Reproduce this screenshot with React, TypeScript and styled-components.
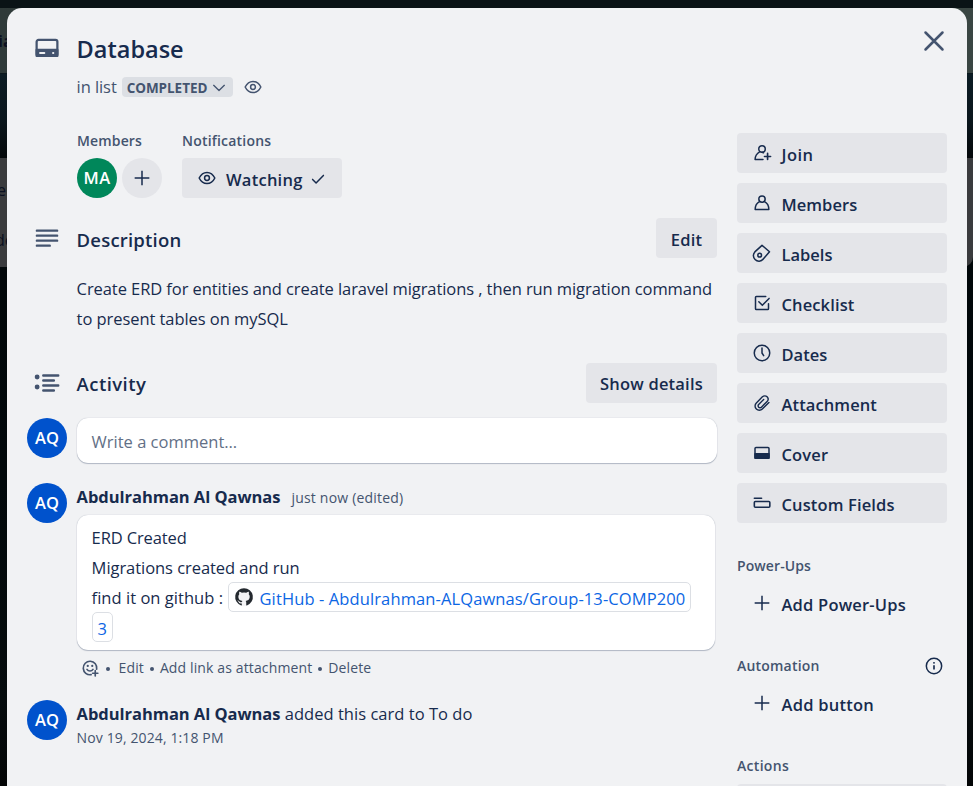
import React, { ReactNode } from "react";
import styled, { createGlobalStyle, css } from "styled-components";

const ink = "#172b4d";
const subtle = "#44546f";

const GlobalStyle = createGlobalStyle`
  * { box-sizing: border-box; }
  html, body { margin: 0; height: 100%; overflow: hidden; }
  body { font-family: "Open Sans", "Noto Sans", sans-serif; font-size: 16.5px; color: ${ink}; background: #02080a; }
  p, h1, h2, h3 { margin: 0; }
  button { font: inherit; color: inherit; border: 0; padding: 0; background: none; text-align: left; }
  svg { display: block; flex: none; }
`;

const Page = styled.div`
  position: relative;
  width: 973px;
  height: 786px;
  overflow: hidden;
  background: linear-gradient(#0a1316 8px, #0a1316 73px, #0c1c24 74px, #0a161c 120px, #05090b 157px, #010709 270px, #01080a 480px, #060c0d 700px, #030506 786px);
`;

const Strip = styled.div<{ $top: number; $height: number; $color: string; $radius?: number }>`
  position: absolute;
  left: 0;
  right: 0;
  top: ${(p) => p.$top}px;
  height: ${(p) => p.$height}px;
  border-radius: 0 0 ${(p) => p.$radius ?? 0}px 0;
  background: ${(p) => p.$color};
`;

const BoardText = styled.span<{ $top: number; $left: number; $bold?: boolean }>`
  position: absolute;
  left: ${(p) => p.$left}px;
  top: ${(p) => p.$top}px;
  font-size: 16px;
  line-height: 24px;
  font-weight: ${(p) => (p.$bold ? 700 : 400)};
  white-space: nowrap;
  color: #0a1020;
`;

const Modal = styled.div`
  position: absolute;
  left: 7px;
  top: 8px;
  width: 960px;
  height: 800px;
  padding: 0 20px;
  border-radius: 15px;
  background: #f1f2f4;
`;

const T = styled.span<{ $ls?: number }>`
  letter-spacing: ${(p) => p.$ls ?? 0}px;
  white-space: pre;
`;

const Row = styled.div<{ $mt?: number }>`
  display: grid;
  grid-template-columns: 40px minmax(0, 1fr);
  column-gap: 9.600px;
  margin-top: ${(p) => p.$mt ?? 0}px;
`;

const IconCell = styled.div<{ $pt?: number }>`
  display: flex;
  justify-content: center;
  align-items: flex-start;
  padding-top: ${(p) => p.$pt ?? 0}px;
  color: ${subtle};
`;

const Header = styled.header`
  display: flex;
  justify-content: space-between;
  height: 125px;
  padding-top: 25px;
`;

const Title = styled.h1`
  font-size: 23.5px;
  line-height: 33px;
  height: 32px;
  font-weight: 550;
`;

const InList = styled.div`
  display: flex;
  align-items: center;
  margin-top: 12px;
  height: 20px;
  line-height: 20px;
  color: ${subtle};
`;

const ListBadge = styled.button`
  display: flex;
  align-items: center;
  justify-content: space-between;
  height: 20px;
  width: 111px;
  margin: 0 10px 0 5px;
  padding: 0 6px 0 5px;
  border-radius: 4px;
  background: #dcdfe4;
  font-size: 13.5px;
  line-height: 20px;
  padding-top: 1px;
  font-weight: 700;
`;

const CloseButton = styled.button`
  width: 30px;
  height: 30px;
  margin: -7px -2px 0 0;
  color: ${subtle};
`;

const Body = styled.div`
  display: grid;
  grid-template-columns: 690px 210px;
  column-gap: 20px;
`;

const Groups = styled.div`
  display: flex;
  gap: 20px;
  padding-left: 50px;
  margin-top: -2px;
`;

const Label = styled.h3`
  font-size: 14px;
  line-height: 20px;
  font-weight: 550;
  color: ${subtle};
`;

const Inline = styled.div`
  display: flex;
  gap: 5px;
  margin-top: 7px;
`;

const Circle = styled.div<{ $bg: string; $fg?: string }>`
  display: flex;
  align-items: center;
  justify-content: center;
  width: 40px;
  height: 40px;
  border-radius: 50%;
  background: ${(p) => p.$bg};
  color: ${(p) => p.$fg ?? "#fff"};
  font-size: 16.5px;
  line-height: 20px;
  font-weight: 600;
  span { margin-top: -1px; }
`;

const buttonBase = css`
  display: flex;
  align-items: center;
  height: 40px;
  border-radius: 4px;
  background: #e4e5e9;
  font-size: 16.5px;
  line-height: 20px;
  padding-top: 3px;
  font-weight: 550;
`;

const WatchButton = styled.button`
  ${buttonBase}
  width: 160px;
  padding-left: 15px;
  svg { margin-top: -4px; }
  svg + span { margin-left: 9px; }
  span + svg { margin-left: 5px; margin-top: -2px; }
`;

const ActionButton = styled.button<{ $w: number; $pt?: number }>`
  ${buttonBase}
  width: ${(p) => p.$w}px;
  padding-top: ${(p) => p.$pt ?? 3}px;
  justify-content: center;
`;

const SideButton = styled.button<{ $ghost?: boolean }>`
  ${buttonBase}
  width: 210px;
  padding-left: 15px;
  gap: 9.500px;
  ${(p) => p.$ghost && "background: transparent; padding-top: 2px;"}
  svg { margin-top: -4px; }
`;

const SectionHead = styled.div`
  display: flex;
  justify-content: space-between;
  height: 40px;
`;

const SectionTitle = styled.h2<{ $lh?: number }>`
  font-size: 18.5px;
  line-height: ${(p) => p.$lh ?? 43}px;
  font-weight: 550;
`;

const Paragraph = styled.p<{ $mt?: number }>`
  margin-top: ${(p) => p.$mt ?? 0}px;
  line-height: 30px;
  white-space: nowrap;
`;

const card = css`
  background: #fff;
  border-radius: 11px;
  box-shadow: 0 1px 1px #091e4240, 0 0 1px #091e424f;
`;

const CommentInput = styled.div`
  ${card}
  height: 45px;
  padding: 0 15px;
  line-height: 47px;
  color: #626f86;
`;

const CommentCard = styled.div`
  ${card}
  width: 638px;
  height: 135px;
  margin-top: 3px;
  padding: 8px 15px 0;
`;

const Meta = styled.div`
  display: flex;
  align-items: baseline;
  height: 29px;
  line-height: 27px;
`;

const Strong = styled.strong`
  font-weight: 700;
`;

const Small = styled.div<{ $ml?: number; $mt?: number }>`
  margin-left: ${(p) => p.$ml ?? 0}px;
  margin-top: ${(p) => p.$mt ?? 0}px;
  font-size: 14px;
  line-height: 20px;
  color: ${subtle};
`;

const SmartLink = styled.a<{ $ml?: number }>`
  display: inline-flex;
  align-items: center;
  gap: 5.500px;
  height: 30px;
  margin-left: ${(p) => p.$ml ?? 0}px;
  margin-top: -1px;
  margin-bottom: 1px;
  padding: 0 5px;
  border: 1px solid #dcdfe4;
  border-radius: 5px;
  color: #0c66e4;
  vertical-align: top;
  span { padding-top: 3px; }
`;

const Actions = styled.div`
  display: flex;
  align-items: center;
  height: 20px;
  margin-top: 8px;
  padding-left: 4px;
  font-size: 14px;
  line-height: 20px;
  color: ${subtle};
`;

const Dot = styled.i<{ $l: number; $r: number }>`
  width: 4px;
  height: 4px;
  margin: 1px ${(p) => p.$r}px 0 ${(p) => p.$l}px;
  border-radius: 50%;
  background: ${subtle};
`;

const Side = styled.aside`
  display: flex;
  flex-direction: column;
`;

const ButtonList = styled.div`
  display: flex;
  flex-direction: column;
  gap: 10px;
`;

const SideLabel = styled.div<{ $mt: number }>`
  display: flex;
  justify-content: space-between;
  align-items: center;
  height: 20px;
  padding-right: 3px;
  margin: ${(p) => p.$mt}px 0 8px;
  svg { color: ${ink}; }
`;

function Svg({ s = 20, w = 1.8, children }: { s?: number; w?: number; children: ReactNode }) {
  return (
    <svg width={s} height={s} viewBox="0 0 24 24" fill="none" stroke="currentColor" strokeWidth={w} strokeLinecap="round" strokeLinejoin="round">
      {children}
    </svg>
  );
}

const Eye = () => (
  <Svg>
    <path d="M2.600 12C4.700 7.700 8 5.300 12 5.300s7.300 2.400 9.400 6.700c-2.100 4.300-5.400 6.700-9.400 6.700S4.700 16.300 2.600 12Z" />
    <circle cx="12" cy="12" r="2.900" />
  </Svg>
);
const Plus = () => <Svg><path d="M12 3.200v17.600M3.200 12h17.600" strokeLinecap="butt" /></Svg>;
const Chevron = () => <Svg s={16} w={2}><path d="M4 8 12 15.800l8-7.800" /></Svg>;
const Check = () => <Svg><path d="m5.500 12.500 4.200 4.200 8.800-9" /></Svg>;
const Close = () => <Svg s={30} w={2}><path d="m5.200 5.200 13.600 13.600M18.800 5.200 5.200 18.800" /></Svg>;
const CardIcon = () => (
  <Svg s={30}>
    <rect x="3.700" y="5.500" width="16.600" height="12.800" rx="1.500" />
    <path d="M3.700 13.500h16.600v4.800H3.700z" fill="currentColor" />
    <path d="M6.400 16h3.500M16.800 16h.3" stroke="#f1f2f4" strokeWidth="1.500" />
  </Svg>
);
const Lines = () => <Svg s={30}><path d="M3.900 5.300h16.200M3.900 9.300h16.200M3.900 13.300h16.200M3.900 17.300h10.300" strokeWidth="1.900" /></Svg>;
const ListIcon = () => (
  <Svg s={30} w={1.900}>
    <path d="M9 5.200h12M9 9.200h8.500M9 13.200h12M9 17.200h8.500" />
    <path d="M4.100 6.400h.01M4.100 14.400h.01" strokeWidth="3.900" />
  </Svg>
);
const Person = () => (
  <Svg>
    <circle cx="12" cy="7.300" r="3.800" />
    <path d="M9 10.300C5.600 12 3.800 15.200 3.800 19.900h16.400c0-4.700-1.800-7.900-5.200-9.600" />
  </Svg>
);
const Join = () => (
  <Svg>
    <circle cx="12" cy="7.100" r="3.900" />
    <path d="M9.500 10.300C6 12.300 3.700 15.300 3.700 19.900h9.500M12 11.100l1.700.5" />
    <path d="M18.700 12.500v7.300M15 16.200h7.300" strokeWidth="2" />
  </Svg>
);
const Tag = () => (
  <Svg>
    <path d="m12 2.800 9 7.700-7.500 8.800a6.500 6.500 0 0 1-9.800.5 6.500 6.500 0 0 1-.3-9.100Z" />
    <circle cx="9.200" cy="14.600" r="2.200" />
  </Svg>
);
const Checklist = () => (
  <Svg>
    <path d="M16.500 4.200H5.200a1 1 0 0 0-1 1v13.600a1 1 0 0 0 1 1h13.600a1 1 0 0 0 1-1V13" />
    <path d="m8.200 10.500 4.200 4.300L20.500 6.500" />
  </Svg>
);
const Clock = () => <Svg><circle cx="12" cy="12" r="9.300" /><path d="M12 6v6l2 3.200" /></Svg>;
const Clip = () => (
  <Svg w={1.700}>
    <path d="m20.300 11.300-7.900 7.800a5 5 0 0 1-7.200 0 5 5 0 0 1 0-7.200l7.300-7.300a3.900 3.900 0 0 1 5.600 0 3.900 3.900 0 0 1 0 5.500l-6.800 6.900a2.300 2.300 0 0 1-3.300 0 2.300 2.300 0 0 1 0-3.300l6-6" />
  </Svg>
);
const Cover = () => (
  <Svg>
    <rect x="3.600" y="5.400" width="16.800" height="12.900" rx="1.200" />
    <path d="M3.600 13h16.800v5.300H3.600z" fill="currentColor" />
  </Svg>
);
const Fields = () => (
  <Svg w={1.900}>
    <path d="M2.800 6.200h8.700" />
    <rect x="2.800" y="10.200" width="18.600" height="6.800" rx="1.200" />
  </Svg>
);
const Info = () => (
  <Svg>
    <circle cx="12" cy="12" r="9.200" />
    <path d="M12 11v5.200" strokeLinecap="butt" strokeWidth="2" />
    <path d="M12 8.200h.01" strokeWidth="2.300" />
  </Svg>
);
const Smiley = () => (
  <Svg s={18} w={2.2}>
    <path d="M13.500 20.900A9 9 0 1 1 20.900 13.500" />
    <path d="M8 13.800a4.700 4.700 0 0 0 8 0M19 15.500v7M15.500 19h7" />
    <path d="M9 9.300h.01M15 9.300h.01" strokeWidth="3" />
  </Svg>
);
const GitHub = () => (
  <svg width="20" height="20" viewBox="0 0 16 16">
    <circle cx="8" cy="8" r="7.300" fill="#f3f3f5" />
    <path fill="#24292f" d="M8 .9A7.100 7.100 0 0 0 5.760 14.720c.36.07.49-.15.49-.34v-1.210c-1.980.43-2.390-.95-2.390-.95-.32-.82-.79-1.040-.79-1.040-.64-.44.05-.43.05-.43.71.05 1.090.73 1.090.73.63 1.090 1.660.78 2.070.59.07-.46.25-.78.45-.95-1.580-.18-3.230-.79-3.230-3.510 0-.78.270-1.410.73-1.910-.08-.18-.32-.9.070-1.880 0 0 .59-.19 1.950.73a6.800 6.800 0 0 1 3.550 0c1.360-.92 1.950-.73 1.950-.73.39.97.15 1.700.07 1.880.46.5.73 1.130.73 1.910 0 2.730-1.660 3.340-3.240 3.510.25.22.48.65.48 1.310v1.950c0 .19.130.41.49.34A7.100 7.100 0 0 0 8 .9Z" />
  </svg>
);

const sideItems: { text: string; icon: ReactNode; ls: number }[] = [
  { text: "Join", icon: <Join />, ls: 0.45 },
  { text: "Members", icon: <Person />, ls: 0.05 },
  { text: "Labels", icon: <Tag />, ls: 0 },
  { text: "Checklist", icon: <Checklist />, ls: 0.12 },
  { text: "Dates", icon: <Clock />, ls: 0 },
  { text: "Attachment", icon: <Clip />, ls: 0.1 },
  { text: "Cover", icon: <Cover />, ls: 0.15 },
  { text: "Custom Fields", icon: <Fields />, ls: 0.13 },
];

export default function App() {
  return (
    <Page>
      <GlobalStyle />
      <Strip $top={8} $height={65} $color="linear-gradient(90deg, #2f3a39, #38443f 50%, #3a4643)" />
      <Strip $top={158} $height={109} $color="#3a3b3d" $radius={10} />
      <BoardText $left={-2} $top={29} $bold>ia</BoardText>
      <BoardText $left={-3} $top={178}>er</BoardText>
      <BoardText $left={-5} $top={228}>de</BoardText>
      <Modal>
        <Header>
          <Row>
            <IconCell><CardIcon /></IconCell>
            <div>
              <Title><T>Database</T></Title>
              <InList>
                <T $ls={-0.08}>in list</T>
                <ListBadge><T $ls={-0.05}>COMPLETED</T><Chevron /></ListBadge>
                <Eye />
              </InList>
            </div>
          </Row>
          <CloseButton aria-label="Close"><Close /></CloseButton>
        </Header>
        <Body>
          <main>
            <Groups>
              <div>
                <Label><T $ls={0.15}>Members</T></Label>
                <Inline>
                  <Circle $bg="#00875a"><T $ls={0.4}>MA</T></Circle>
                  <Circle $bg="#e4e5e9" $fg={ink}><Plus /></Circle>
                </Inline>
              </div>
              <div>
                <Label><T $ls={0.2}>Notifications</T></Label>
                <Inline><WatchButton><Eye /><T $ls={0.25}>Watching</T><Check /></WatchButton></Inline>
              </div>
            </Groups>
            <Row $mt={20}>
              <IconCell $pt={6}><Lines /></IconCell>
              <div>
                <SectionHead><SectionTitle><T $ls={0.2}>Description</T></SectionTitle><ActionButton $w={61}><T $ls={0.2}>Edit</T></ActionButton></SectionHead>
                <Paragraph $mt={16}>
                  <T $ls={-0.08}>Create ERD for entities and create laravel migrations , then run migration command</T><br />
                  <T $ls={-0.06}>to present tables on mySQL</T>
                </Paragraph>
              </div>
            </Row>
            <Row $mt={29}>
              <IconCell $pt={6}><ListIcon /></IconCell>
              <SectionHead><SectionTitle $lh={42}><T $ls={0.45}>Activity</T></SectionTitle><ActionButton $w={131} $pt={2}><T $ls={0.2}>Show details</T></ActionButton></SectionHead>
            </Row>
            <Row $mt={15}>
              <Circle $bg="#0052cc"><T>AQ</T></Circle>
              <CommentInput><T>Write a comment…</T></CommentInput>
            </Row>
            <Row $mt={20}>
              <Circle $bg="#0052cc"><T>AQ</T></Circle>
              <div>
                <Meta><Strong><T $ls={-0.04}>Abdulrahman Al Qawnas</T></Strong><Small $ml={11}><T $ls={0.2}>just now (edited)</T></Small></Meta>
                <CommentCard>
                  <Paragraph>
                    <T $ls={-0.12}>ERD Created</T><br />
                    <T $ls={-0.05}>Migrations created and run</T><br />
                    <T $ls={0.03}>find it on github :</T>
                    <SmartLink $ml={5}><GitHub /><T $ls={0.11}>GitHub - Abdulrahman-ALQawnas/Group-13-COMP200</T></SmartLink><br />
                    <SmartLink><T>3</T></SmartLink>
                  </Paragraph>
                </CommentCard>
                <Actions>
                  <Smiley /><Dot $l={7} $r={9} /><T $ls={0.1}>Edit</T><Dot $l={6} $r={6} /><T $ls={0.13}>Add link as attachment</T><Dot $l={6} $r={6} /><T $ls={0.1}>Delete</T>
                </Actions>
              </div>
            </Row>
            <Row $mt={22}>
              <Circle $bg="#0052cc"><T>AQ</T></Circle>
              <div>
                <Meta><Strong><T $ls={-0.04}>Abdulrahman Al Qawnas</T></Strong><T $ls={0.03}> added this card to To do</T></Meta>
                <Small $mt={-1}><T $ls={0.12}>Nov 19, 2024, 1:18 PM</T></Small>
              </div>
            </Row>
          </main>
          <Side>
            <ButtonList>
              {sideItems.map((item) => (
                <SideButton key={item.text}>{item.icon}<T $ls={item.ls}>{item.text}</T></SideButton>
              ))}
            </ButtonList>
            <SideLabel $mt={33}><Label><T $ls={0.1}>Power-Ups</T></Label></SideLabel>
            <SideButton $ghost><Plus /><T $ls={0.2}>Add Power-Ups</T></SideButton>
            <SideLabel $mt={32}><Label><T $ls={0.2}>Automation</T></Label><Info /></SideLabel>
            <SideButton $ghost><Plus /><T $ls={0.25}>Add button</T></SideButton>
            <SideLabel $mt={32}><Label><T $ls={0.3}>Actions</T></Label></SideLabel>
            <SideButton />
          </Side>
        </Body>
      </Modal>
    </Page>
  );
}
